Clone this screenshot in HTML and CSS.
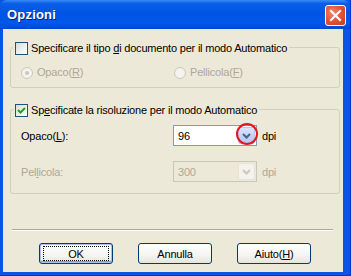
FILE: index.html
```html
<!DOCTYPE html>
<html lang="it">
<head>
  <meta charset="UTF-8" />
  <title>Opzioni</title>
  <link rel="stylesheet" href="styles.css">
</head>
<body>
  <div class="window">
    <div class="titlebar">
      <span class="title">Opzioni</span>
      <span class="close">
        <svg width="21" height="21" viewBox="0 0 21 21">
          <path d="M6 6 L15 15 M15 6 L6 15" stroke="#fff" stroke-width="2.2" stroke-linecap="square" fill="none"/>
        </svg>
      </span>
    </div>

    <div class="client">
      <div class="group">
        <div class="group-title">
          <span class="checkbox"></span>
          <span>Specificare il tipo <u>d</u>i documento per il modo Automatico</span>
        </div>
        <div class="radios">
          <div class="radio-item"><span class="radio checked"></span><span>Opaco(<u>R</u>)</span></div>
          <div class="radio-item"><span class="radio"></span><span>Pellicola(<u>F</u>)</span></div>
        </div>
      </div>

      <div class="group group-ris">
        <div class="group-title">
          <span class="checkbox checked">
            <svg width="11" height="11" viewBox="0 0 11 11">
              <path d="M2 5 L4.5 7.5 L9 3" stroke="#21a121" stroke-width="2" fill="none"/>
            </svg>
          </span>
          <span>Sp<u>e</u>cificate la risoluzione per il modo Automatico</span>
        </div>
        <div class="field-row">
          <span class="field-label">Opaco(<u>L</u>):</span>
          <div class="combo">
            <span class="combo-value">96</span>
            <span class="drop">
              <svg width="9" height="6" viewBox="0 0 9 6">
                <path d="M1 1 L4.5 4.5 L8 1" stroke="#4d6185" stroke-width="2" fill="none"/>
              </svg>
            </span>
            <span class="mark"></span>
          </div>
          <span class="unit">dpi</span>
        </div>
        <div class="field-row disabled">
          <span class="field-label">Pel<u>l</u>icola:</span>
          <div class="combo">
            <span class="combo-value">300</span>
            <span class="drop">
              <svg width="9" height="6" viewBox="0 0 9 6">
                <path d="M1 1 L4.5 4.5 L8 1" stroke="#c9c7ba" stroke-width="2" fill="none"/>
              </svg>
            </span>
          </div>
          <span class="unit">dpi</span>
        </div>
      </div>

      <div class="separator"></div>

      <div class="buttons">
        <span class="btn default"><span class="focus">OK</span></span>
        <span class="btn">Annulla</span>
        <span class="btn"><span>Aiuto(<u>H</u>)</span></span>
      </div>
    </div>
  </div>
</body>
</html>
```

FILE: styles.css
```css
body {
  margin: 0;
  font-family: 'Liberation Sans', Arial, sans-serif;
  font-size: 11px;
  letter-spacing: -0.2px;
  color: #000;
  background: #fff;
}

.window {
  width: 351px;
  height: 276px;
  display: flex;
  flex-direction: column;
  background: #0a55e3;
  box-sizing: border-box;
  border-right: 1px solid #0831d9;
  border-bottom: 1px solid #0831d9;
}

.titlebar {
  height: 29px;
  flex: none;
  display: flex;
  align-items: center;
  justify-content: space-between;
  padding: 0 4px 0 7px;
  background: linear-gradient(#3b8cf5 0%, #0a5fe8 12%, #0054e3 45%, #0058ea 80%, #0047cc 100%);
  border-radius: 7px 7px 0 0;
}

.title {
  color: #fff;
  font-weight: bold;
  font-size: 13px;
  text-shadow: 1px 1px 0 #0a1d7a;
  letter-spacing: 0.2px;
}

.close {
  width: 21px;
  height: 21px;
  box-sizing: border-box;
  border: 1px solid #fff;
  border-radius: 3px;
  background: radial-gradient(circle at 35% 35%, #f08a6c 0%, #e0573a 45%, #c63a1a 100%);
  display: flex;
  margin-top: 1px;
}

.close svg {
  margin: -1px;
}

.client {
  flex: 1;
  margin: 0 7px 3px 3px;
  background: #ece9d8;
  padding: 18px 3px 0 7px;
}

.group {
  border: 1px solid #d0d0bf;
  border-radius: 3px;
  padding: 0 10px 8px;
}

.group-ris {
  margin-top: 21px;
  padding-bottom: 11px;
}

.group-title {
  display: flex;
  align-items: center;
  gap: 3px;
  width: fit-content;
  margin: -6px 0 0 -8px;
  padding: 0 2px;
  background: #ece9d8;
  line-height: 13px;
}

.checkbox {
  width: 13px;
  height: 13px;
  box-sizing: border-box;
  border: 1px solid #1c5180;
  background: linear-gradient(135deg, #dcdcd5 0%, #f2f2ee 60%, #fff 100%);
  display: flex;
  align-items: center;
  justify-content: center;
}

.radios {
  display: grid;
  grid-template-columns: 153px auto;
  margin-top: 11px;
  color: #aca899;
  line-height: 13px;
}

.radio-item {
  display: flex;
  align-items: center;
  gap: 4px;
}

.radio {
  width: 12px;
  height: 12px;
  box-sizing: border-box;
  border: 1px solid #cac8bb;
  border-radius: 50%;
  background: #f4f3ee;
  display: flex;
  align-items: center;
  justify-content: center;
}

.radio.checked::after {
  content: "";
  width: 4px;
  height: 4px;
  border-radius: 50%;
  background: #cac8bb;
}

.field-row {
  display: flex;
  align-items: center;
  margin-top: 8px;
  height: 21px;
}

.field-row + .field-row {
  margin-top: 15px;
}

.field-label {
  width: 152px;
}

.combo {
  position: relative;
  width: 84px;
  height: 21px;
  box-sizing: border-box;
  border: 1px solid #7f9db9;
  background: #fff;
  display: flex;
  align-items: center;
  justify-content: space-between;
  padding: 0 1px 0 4px;
}

.drop {
  width: 17px;
  height: 17px;
  box-sizing: border-box;
  border: 1px solid #b6c9f3;
  border-radius: 2px;
  background: linear-gradient(#dbe5fc 0%, #c3d3fb 50%, #b1c6f7 100%);
  display: flex;
  align-items: center;
  justify-content: center;
}

.mark {
  position: absolute;
  left: 62px;
  top: -3px;
  width: 22px;
  height: 22px;
  box-sizing: border-box;
  border: 2px solid #e8141c;
  border-radius: 50%;
}

.unit {
  margin-left: 5px;
}

.disabled {
  color: #aca899;
}

.disabled .combo {
  border-color: #c9c7ba;
  background: #ece9d8;
}

.disabled .drop {
  border-color: #e6e4d9;
  background: #f3f2ec;
}

.separator {
  margin: 35px 7px 0 2px;
  border-top: 1px solid #aca899;
  border-bottom: 1px solid #fff;
}

.buttons {
  display: flex;
  gap: 25px;
  margin-top: 12px;
  padding-left: 29px;
}

.btn {
  width: 74px;
  height: 21px;
  box-sizing: border-box;
  border: 1px solid #003c74;
  border-radius: 3px;
  background: linear-gradient(#ffffff 0%, #f4f4f0 60%, #e6e5dc 100%);
  display: flex;
  align-items: center;
  justify-content: center;
}

.btn.default {
  box-shadow: inset 0 0 0 1px #a8c3ef, inset 0 -1px 0 1px #7c9fe0;
}

.focus {
  width: 66px;
  height: 15px;
  box-sizing: border-box;
  border: 1px dotted #000;
  display: flex;
  align-items: center;
  justify-content: center;
}
```
